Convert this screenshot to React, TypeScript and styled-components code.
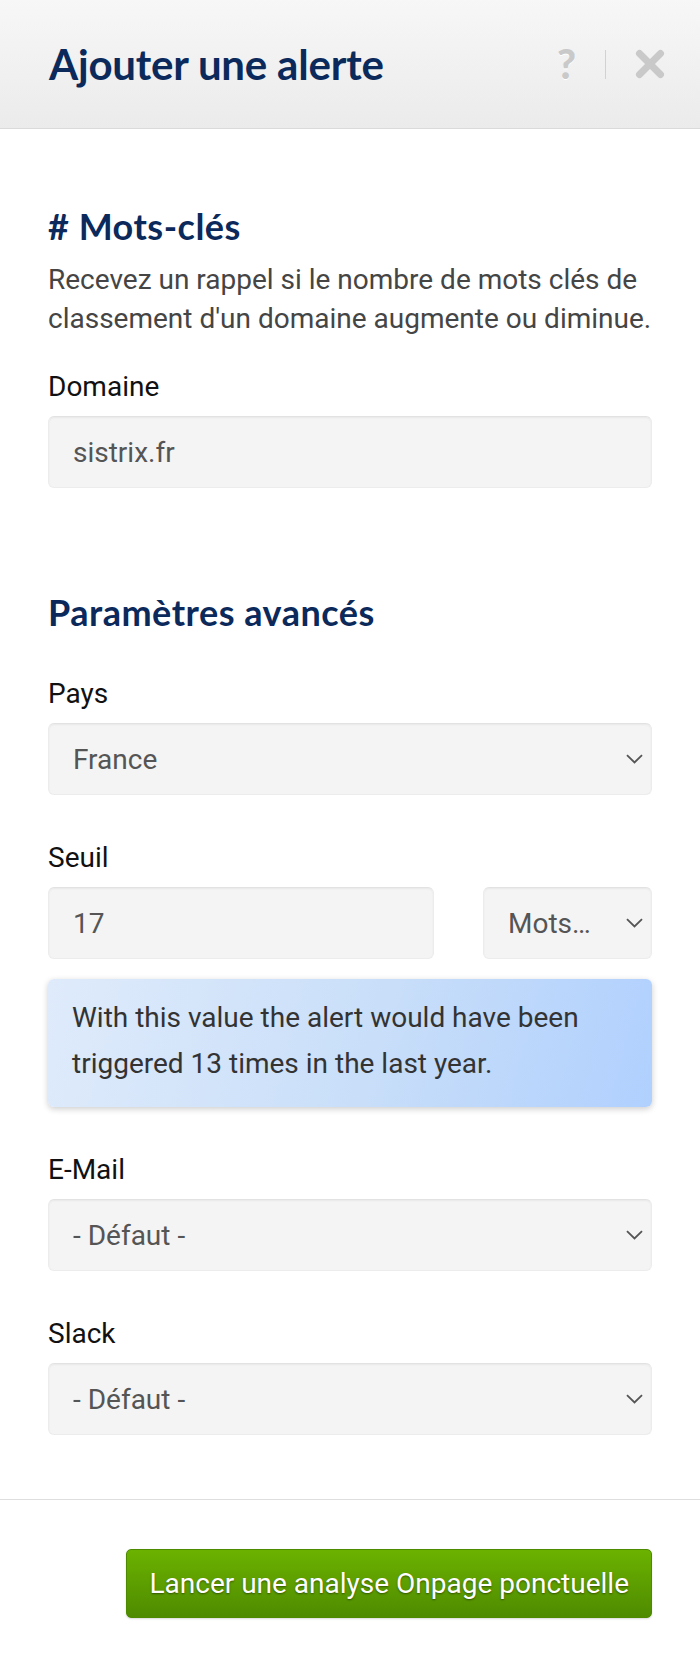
import React from "react";
import styled, { createGlobalStyle } from "styled-components";

const GlobalStyle = createGlobalStyle`
  html, body { margin: 0; padding: 0; background: #ffffff; }
  body { font-family: Roboto, "Liberation Sans", Arial, sans-serif; }
  * { box-sizing: border-box; }
`;

const Page = styled.div`
  width: 700px;
  min-height: 1660px;
  display: flex;
  flex-direction: column;
  background: #ffffff;
`;

const Header = styled.header`
  height: 129px;
  display: flex;
  align-items: center;
  justify-content: space-between;
  padding: 0 35px 0 49px;
  background: linear-gradient(180deg, #f7f7f7 0%, #ebebeb 100%);
  border-bottom: 1px solid #dadada;
`;

const Title = styled.h1`
  margin: 0;
  font-family: Lato, "Open Sans", sans-serif;
  font-weight: 700;
  font-size: 42px;
  line-height: 50px;
  color: #0b2a5b;
  letter-spacing: -0.2px;
`;

const HeaderActions = styled.div`
  display: flex;
  align-items: center;
  gap: 29px;
`;

const HelpButton = styled.span`
  font-family: Lato, "Liberation Sans", sans-serif;
  font-weight: 900;
  font-size: 41px;
  line-height: 36px;
  color: #c9c9c9;
  text-shadow: 0 1px 0 #ffffff;
`;

const Divider = styled.span`
  width: 1px;
  height: 29px;
  background: #d2d2d2;
`;

const CloseButton = styled.span`
  display: flex;
  width: 30px;
  height: 30px;
`;

const Main = styled.main`
  flex: 1;
  padding: 75px 48px 63px;
  display: flex;
  flex-direction: column;
`;

const Heading = styled.h2<{ $spaced?: boolean }>`
  margin: ${(p) => (p.$spaced ? "102px" : "0")} 0 0;
  font-family: Lato, "Open Sans", sans-serif;
  font-weight: 700;
  font-size: 36px;
  line-height: 44px;
  color: #0b2a5b;
  letter-spacing: 0.5px;
`;

const Description = styled.p`
  margin: 12px 0 29px;
  font-size: 28px;
  line-height: 39px;
  color: #454545;
`;

const Fields = styled.div`
  margin-top: 40px;
  display: flex;
  flex-direction: column;
  gap: 43px;
`;

const Field = styled.div`
  display: flex;
  flex-direction: column;
`;

const Label = styled.label`
  font-size: 28px;
  line-height: 40px;
  color: #111111;
  margin-bottom: 9px;
`;

const TextInput = styled.input`
  width: 100%;
  height: 72px;
  padding: 0 24px;
  font-family: Roboto, "Liberation Sans", sans-serif;
  font-size: 28px;
  color: #555555;
  background: #f4f4f4;
  border: 1px solid #ececec;
  border-top-color: #e2e2e2;
  border-radius: 6px;
  box-shadow: inset 0 1px 2px rgba(0, 0, 0, 0.05);
  outline: none;
`;

const SelectWrap = styled.div`
  position: relative;
  width: 100%;
`;

const Select = styled.select`
  width: 100%;
  height: 72px;
  padding: 0 56px 0 24px;
  appearance: none;
  -webkit-appearance: none;
  font-family: Roboto, "Liberation Sans", sans-serif;
  font-size: 28px;
  color: #555555;
  background: #f4f4f4;
  border: 1px solid #ececec;
  border-top-color: #e2e2e2;
  border-radius: 6px;
  box-shadow: inset 0 1px 2px rgba(0, 0, 0, 0.05);
  outline: none;
  white-space: nowrap;
  overflow: hidden;
  text-overflow: ellipsis;
`;

const Chevron = styled.svg`
  position: absolute;
  right: 9px;
  top: 50%;
  width: 17px;
  height: 10px;
  margin-top: -5px;
  pointer-events: none;
`;

const ThresholdRow = styled.div`
  display: grid;
  grid-template-columns: 1fr 169px;
  gap: 49px;
`;

const InfoBox = styled.div`
  margin-top: 20px;
  padding: 16px 24px 20px;
  border-radius: 6px;
  background: linear-gradient(105deg, #dfebfb 0%, #c8def9 55%, #b0d0fe 100%);
  box-shadow: 0 2px 6px rgba(0, 0, 0, 0.2);
  font-size: 28px;
  line-height: 46px;
  color: #333333;
`;

const Footer = styled.footer`
  border-top: 1px solid #dedede;
  padding: 49px 48px 42px;
  display: flex;
  justify-content: flex-end;
`;

const PrimaryButton = styled.button`
  height: 69px;
  padding: 0 22px;
  font-family: Roboto, "Liberation Sans", sans-serif;
  font-size: 28px;
  color: #ffffff;
  text-shadow: 0 1px 2px rgba(0, 0, 0, 0.45);
  background: linear-gradient(180deg, #6bb200 0%, #4f8b00 100%);
  border: 1px solid #4e8a00;
  border-radius: 5px;
  box-shadow: 0 1px 2px rgba(0, 0, 0, 0.15);
  cursor: pointer;
`;

const ChevronIcon = () => (
  <Chevron viewBox="0 0 17 10" fill="none">
    <path d="M1 1.2l7.5 7.3 7.5-7.3" stroke="#555" strokeWidth="1.8" />
  </Chevron>
);

const SelectField = ({ value, options }: { value: string; options: string[] }) => (
  <SelectWrap>
    <Select defaultValue={value}>
      {options.map((o) => (
        <option key={o} value={o}>
          {o}
        </option>
      ))}
    </Select>
    <ChevronIcon />
  </SelectWrap>
);

export default function App() {
  return (
    <>
      <GlobalStyle />
      <Page>
        <Header>
          <Title>Ajouter une alerte</Title>
          <HeaderActions>
            <HelpButton>?</HelpButton>
            <Divider />
            <CloseButton>
              <svg width="30" height="30" viewBox="0 0 30 30">
                <path d="M4.5 4.5L25.5 25.5M25.5 4.5L4.5 25.5" stroke="#c9c9c9" strokeWidth="7" strokeLinecap="round" />
              </svg>
            </CloseButton>
          </HeaderActions>
        </Header>
        <Main>
          <Heading># Mots-clés</Heading>
          <Description>
            Recevez un rappel si le nombre de mots clés de classement d'un domaine augmente ou diminue.
          </Description>
          <Field>
            <Label>Domaine</Label>
            <TextInput defaultValue="sistrix.fr" />
          </Field>

          <Heading $spaced>Paramètres avancés</Heading>
          <Fields>
            <Field>
              <Label>Pays</Label>
              <SelectField value="France" options={["France", "Allemagne", "Espagne", "Italie"]} />
            </Field>
            <Field>
              <Label>Seuil</Label>
              <ThresholdRow>
                <TextInput defaultValue="17" />
                <SelectField value="Mots-clés" options={["Mots-clés", "Pourcentage"]} />
              </ThresholdRow>
              <InfoBox>With this value the alert would have been triggered 13 times in the last year.</InfoBox>
            </Field>
            <Field>
              <Label>E-Mail</Label>
              <SelectField value="- Défaut -" options={["- Défaut -"]} />
            </Field>
            <Field>
              <Label>Slack</Label>
              <SelectField value="- Défaut -" options={["- Défaut -"]} />
            </Field>
          </Fields>
        </Main>
        <Footer>
          <PrimaryButton>Lancer une analyse Onpage ponctuelle</PrimaryButton>
        </Footer>
      </Page>
    </>
  );
}
